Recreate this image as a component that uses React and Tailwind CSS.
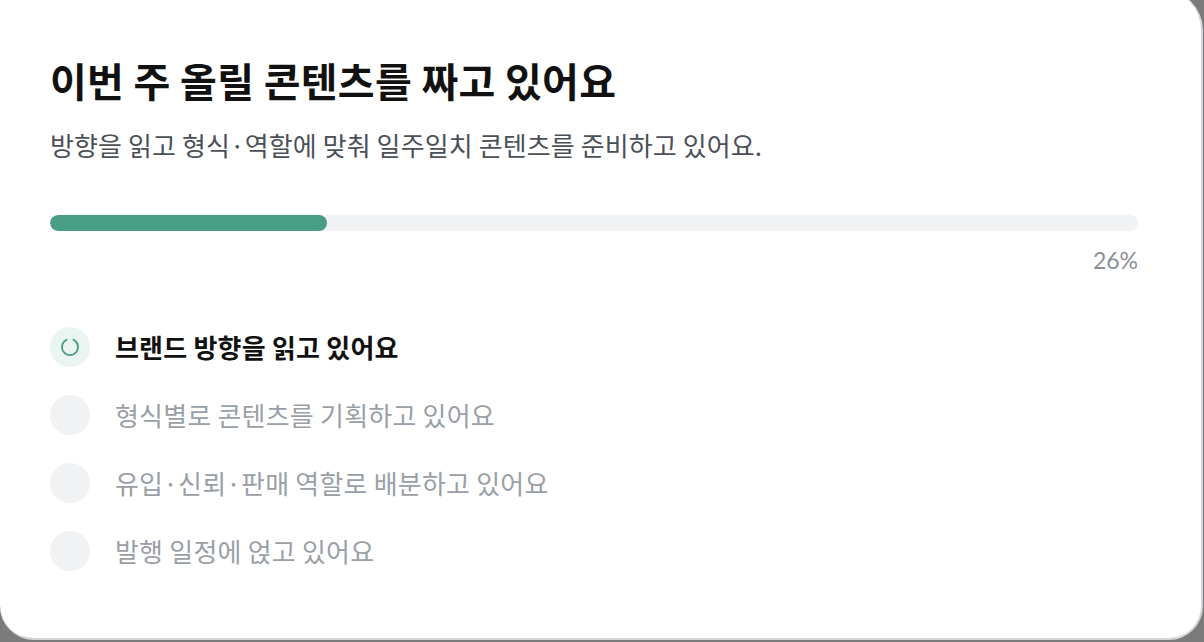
const steps = [
  { label: '브랜드 방향을 읽고 있어요', active: true },
  { label: '형식별로 콘텐츠를 기획하고 있어요' },
  { label: '유입·신뢰·판매 역할로 배분하고 있어요' },
  { label: '발행 일정에 얹고 있어요' },
];

function Spinner() {
  return (
    <svg width="22" height="22" viewBox="0 0 22 22" fill="none">
      <path
        d="M14.4 3.8A8 8 0 1 1 7.6 3.8"
        stroke="#479e85"
        strokeWidth="1.8"
        strokeLinecap="round"
      />
    </svg>
  );
}

export default function App() {
  const progress = 26;

  return (
    <div className="h-[642px] w-[1204px] overflow-hidden bg-[#7b7b7b] font-['Noto_Sans_CJK_KR','Noto_Sans',sans-serif]">
      <div className="-mt-[10px] h-[650px] w-[1203px] rounded-tr-[40px] rounded-b-[34px] border-r-2 border-b-2 border-[#d4d5d8] bg-white pl-[50px] pr-[63px] pt-[66px]">
        <h1 className="text-[40px] font-bold leading-[48px] tracking-[0.3px] text-[#111111]">
          이번 주 올릴 콘텐츠를 짜고 있어요
        </h1>
        <p className="mt-[24px] text-[26px] leading-[34px] tracking-[0.1px] text-[#4b5058]">
          방향을 읽고 형식·역할에 맞춰 일주일치 콘텐츠를 준비하고 있어요.
        </p>

        <div className="mt-[53px] h-4 w-full overflow-hidden rounded-full bg-[#f1f2f4]">
          <div className="h-full w-[25.5%] rounded-full bg-[#479e85]" />
        </div>
        <div className="mt-[15px] text-right font-['Lato',sans-serif] text-[23px] leading-7 text-[#8a8f98]">
          {progress}%
        </div>

        <ul className="mt-[53px] flex flex-col gap-[28px]">
          {steps.map((s) => (
            <li key={s.label} className="flex items-center gap-[25px]">
              <div
                className={`flex h-10 w-10 shrink-0 items-center justify-center rounded-full ${
                  s.active ? 'bg-[#eaf4f0]' : 'bg-[#f1f2f4]'
                }`}
              >
                {s.active && <Spinner />}
              </div>
              <span
                className={`text-[26px] leading-10 tracking-[0.2px] ${
                  s.active ? 'font-semibold text-[#111111]' : 'text-[#9a9fa7]'
                }`}
              >
                {s.label}
              </span>
            </li>
          ))}
        </ul>
      </div>
    </div>
  );
}
